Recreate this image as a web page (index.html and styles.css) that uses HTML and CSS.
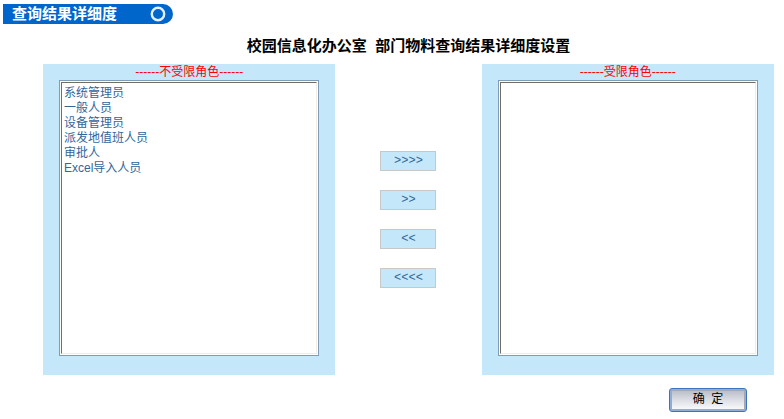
FILE: index.html
```html
<!DOCTYPE html>
<html lang="zh-CN">
<head>
<meta charset="utf-8">
<title>查询结果详细度</title>
<link rel="stylesheet" href="styles.css">
</head>
<body>
<header class="banner">
  <span>查询结果详细度</span>
  <svg class="ring" viewBox="0 0 16 16" aria-hidden="true"><circle cx="8" cy="8" r="6.2" fill="none" stroke="#e4f0fc" stroke-width="2.4"/></svg>
</header>
<main>
  <h1 class="title">校园信息化办公室&nbsp; 部门物料查询结果详细度设置</h1>
  <form>
    <div class="transfer">
      <section class="panel">
        <label class="caption" for="free">------不受限角色------</label>
        <div class="frame">
          <select class="list" id="free" multiple>
            <option>系统管理员</option>
            <option>一般人员</option>
            <option>设备管理员</option>
            <option>派发地值班人员</option>
            <option>审批人</option>
            <option>Excel导入人员</option>
          </select>
        </div>
      </section>
      <div class="moves">
        <button class="move" type="button">&gt;&gt;&gt;&gt;</button>
        <button class="move" type="button">&gt;&gt;</button>
        <button class="move" type="button">&lt;&lt;</button>
        <button class="move" type="button">&lt;&lt;&lt;&lt;</button>
      </div>
      <section class="panel">
        <label class="caption" for="limited">------受限角色------</label>
        <div class="frame">
          <select class="list" id="limited" multiple></select>
        </div>
      </section>
    </div>
    <div class="actions">
      <button class="confirm" type="submit">确&nbsp; 定</button>
    </div>
  </form>
</main>
</body>
</html>
```
FILE: styles.css
```css
* {
  box-sizing: border-box;
}

body {
  margin: 0;
  background: #fff;
  font: 12px/15px "Liberation Sans", "Noto Sans CJK SC", sans-serif;
}

.banner {
  display: flex;
  align-items: center;
  justify-content: space-between;
  width: 170px;
  height: 20px;
  margin: 4px 0 0 3px;
  padding: 0 7px 0 9px;
  border-radius: 0 10px 10px 0;
  background: #0066cc;
  color: #fff;
  font-size: 15px;
  line-height: 20px;
  font-weight: bold;
}

.ring {
  width: 16px;
  height: 16px;
}

main {
  padding: 12px 10px 0 43px;
}

.title {
  margin: 0 0 8px;
  font-size: 15px;
  line-height: 20px;
  text-align: center;
  color: #000;
}

.transfer {
  display: grid;
  grid-template-columns: 2fr 1fr 2fr;
}

.panel {
  padding: 0 16px 19px;
  background: #c4e7fa;
}

.caption {
  display: block;
  height: 16px;
  line-height: 16px;
  text-align: center;
  color: #f00;
}

.frame {
  height: 276px;
  padding: 1px;
  border: 1px solid #7f9db9;
  background: #fff;
}

.list {
  display: block;
  width: 100%;
  height: 100%;
  padding: 0;
  border: 1px solid;
  border-color: #716f64 #f1efe2 #f1efe2 #716f64;
  border-radius: 0;
  outline: 0;
  overflow: hidden;
  background: #fff;
  color: #336699;
  font: inherit;
}

.list option {
  height: 15px;
  min-height: 0;
  padding: 0 2px;
}

.moves {
  display: flex;
  flex-direction: column;
  align-items: center;
  justify-content: center;
  gap: 19px;
}

.move {
  width: 56px;
  height: 20px;
  padding: 0;
  border: 1px solid #c8c8c8;
  background: #c4e7fa;
  color: #336699;
  font: 12px/18px "Liberation Mono", monospace;
}

.actions {
  display: flex;
  justify-content: flex-end;
  padding: 13px 27px 0 0;
}

.confirm {
  width: 78px;
  height: 24px;
  padding: 0 0 2px;
  border: 1px solid #3c74bc;
  border-radius: 3px;
  background: linear-gradient(#b4b8c4, #dcdee4 50%, #fff);
  box-shadow: inset 0 0 0 1px #8fb0dc, inset 0 0 0 2px #a4a8b0;
  color: #000;
  font: inherit;
}
```
